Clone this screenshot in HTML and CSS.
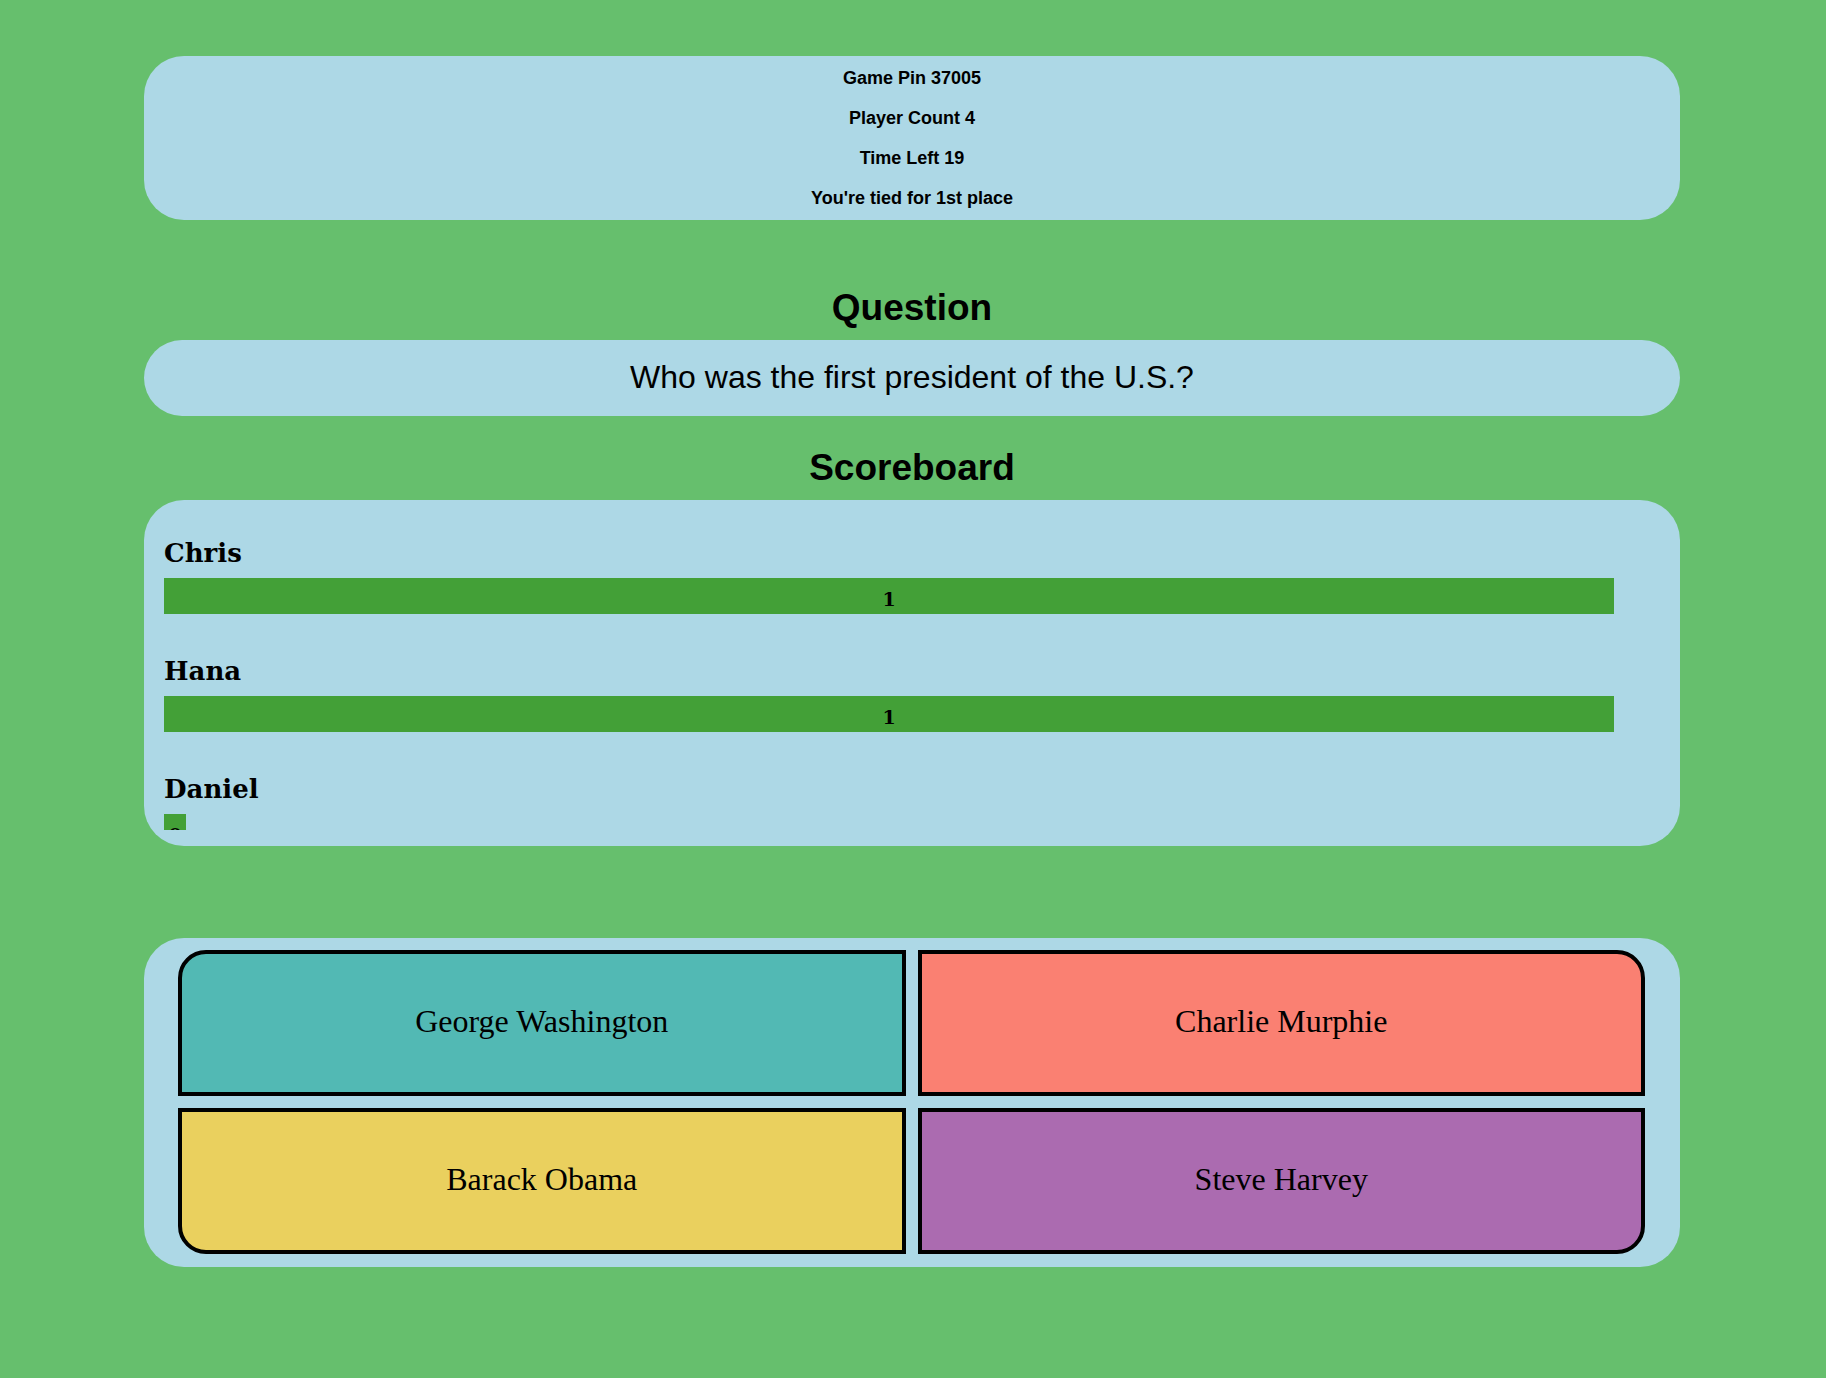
FILE: index.html
```html
<!DOCTYPE html>
<html lang="en">
<head>
<meta charset="utf-8">
<title>Quiz Game</title>
<link rel="stylesheet" href="styles.css">
</head>
<body>
<div class="page">
  <section class="panel status">
    <p class="status-line">Game Pin 37005</p>
    <p class="status-line">Player Count 4</p>
    <p class="status-line">Time Left 19</p>
    <p class="status-line">You're tied for 1st place</p>
  </section>

  <h1 class="heading heading-question">Question</h1>
  <div class="panel question">Who was the first president of the U.S.?</div>

  <h1 class="heading heading-score">Scoreboard</h1>
  <section class="panel scoreboard">
    <div class="score-list">
      <div class="entry">
        <h2 class="name">Chris</h2>
        <div class="bar" style="width:100%">1</div>
      </div>
      <div class="entry">
        <h2 class="name">Hana</h2>
        <div class="bar" style="width:100%">1</div>
      </div>
      <div class="entry">
        <h2 class="name">Daniel</h2>
        <div class="bar" style="width:22px">0</div>
      </div>
    </div>
  </section>

  <section class="panel answers">
    <button class="answer answer-a">George Washington</button>
    <button class="answer answer-b">Charlie Murphie</button>
    <button class="answer answer-c">Barack Obama</button>
    <button class="answer answer-d">Steve Harvey</button>
  </section>
</div>
</body>
</html>
```

FILE: styles.css
```css
html, body {
  margin: 0;
  background: #66bf6d;
}

body {
  padding: 0 2px 0 0;
  font-family: "Liberation Sans", Arial, sans-serif;
  color: #000;
}

.page {
  width: 1536px;
  margin: 0 auto;
  padding-top: 56px;
  padding-bottom: 60px;
}

.panel {
  background: #add8e6;
  border-radius: 40px;
}

/* status */
.status {
  box-sizing: border-box;
  height: 164px;
  padding: 12px 0 12px;
  display: flex;
  flex-direction: column;
  gap: 20px;
  align-items: center;
}

.status-line {
  margin: 0;
  font-size: 18px;
  line-height: 20px;
  font-weight: bold;
}

/* headings */
.heading {
  margin: 0;
  text-align: center;
  font-size: 37px;
  line-height: 41px;
  font-weight: bold;
}

.heading-question {
  margin-top: 67px;
  margin-bottom: 12px;
}

.heading-score {
  margin-top: 31px;
  margin-bottom: 12px;
}

/* question */
.question {
  box-sizing: border-box;
  height: 76px;
  padding-top: 19px;
  text-align: center;
  font-size: 32px;
  line-height: 37px;
}

/* scoreboard */
.scoreboard {
  box-sizing: border-box;
  height: 346px;
  padding: 16px 66px 16px 20px;
}

.score-list {
  height: 314px;
  overflow: hidden;
  box-sizing: border-box;
  padding-top: 21px;
}

.entry {
  margin-bottom: 41px;
}

.name {
  margin: 0 0 9px;
  font-family: "DejaVu Serif", Georgia, serif;
  font-weight: bold;
  font-size: 26px;
  line-height: 32px;
}

.bar {
  box-sizing: border-box;
  height: 36px;
  padding-top: 3px;
  background: #43a037;
  text-align: center;
  font-family: "DejaVu Serif", Georgia, serif;
  font-weight: bold;
  font-size: 19px;
  line-height: 36px;
  overflow: hidden;
}

/* answers */
.answers {
  margin-top: 92px;
  padding: 12px 35px 13px 34px;
  display: grid;
  grid-template-columns: 1fr 1fr;
  grid-auto-rows: 146px;
  gap: 12px;
}

.answer {
  box-sizing: border-box;
  margin: 0;
  border: 4px solid #000;
  border-radius: 0;
  font-family: "Liberation Serif", "Times New Roman", serif;
  font-size: 32px;
  color: #000;
  padding: 0 0 3px;
  cursor: pointer;
}

.answer-a {
  background: #52b9b4;
  border-top-left-radius: 28px;
}

.answer-b {
  background: #fa8072;
  border-top-right-radius: 28px;
}

.answer-c {
  background: #ead05e;
  border-bottom-left-radius: 28px;
}

.answer-d {
  background: #ab6bb0;
  border-bottom-right-radius: 28px;
}
```
